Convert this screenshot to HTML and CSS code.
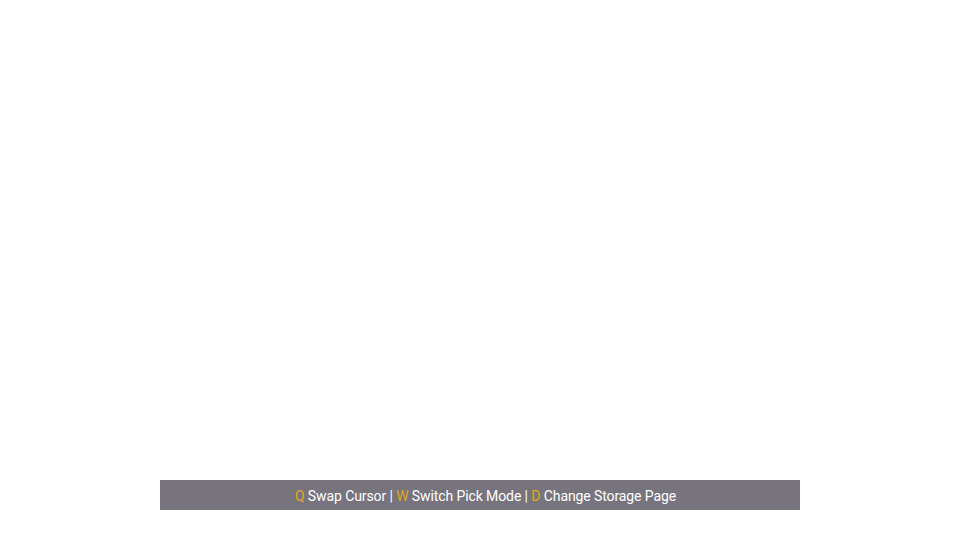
FILE: index.html
```html
<!DOCTYPE html>
<html>
<head>
<meta charset="utf-8">
<link rel="stylesheet" href="styles.css">
</head>
<body>
<div class="screen">
  <div class="hint-bar"><span class="key">Q</span> Swap Cursor | <span class="key">W</span> Switch Pick Mode | <span class="key">D</span> Change Storage Page</div>
</div>
</body>
</html>
```
FILE: styles.css
```css
html, body {
  margin: 0;
  padding: 0;
  background: #ffffff;
}
.screen {
  width: 960px;
  height: 540px;
  display: flex;
  flex-direction: column;
  justify-content: flex-end;
  align-items: center;
  padding-bottom: 30px;
  box-sizing: border-box;
}
.hint-bar {
  width: 640px;
  height: 30px;
  box-sizing: border-box;
  padding-left: 11px;
  background: #77747d;
  color: #ffffff;
  font-family: "Roboto", "Liberation Sans", sans-serif;
  font-size: 14px;
  font-weight: 400;
  letter-spacing: -0.1px;
  line-height: 32px;
  text-align: center;
  white-space: nowrap;
}
.key {
  color: #e0a820;
}
```
